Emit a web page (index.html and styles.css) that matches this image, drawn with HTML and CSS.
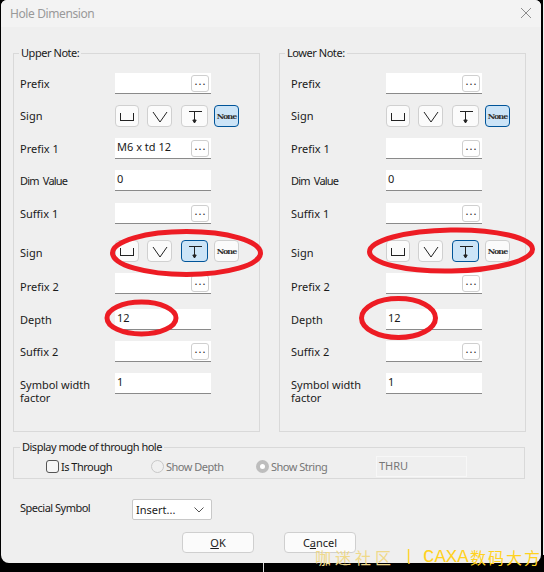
FILE: index.html
```html
<!DOCTYPE html>
<html lang="en">
<head>
    <meta charset="UTF-8">
    <meta name="viewport" content="width=device-width, initial-scale=1.0">
    <title>Hole Dimension</title>
    <link rel="stylesheet" href="styles.css">
</head>
<body>
    <div class="dialog">
        <div class="title-bar">
            <span class="title">Hole Dimension</span>
            <svg class="close" width="10" height="10" viewBox="0 0 10 10"><path d="M0 0L10 10M10 0L0 10"/></svg>
        </div>

        <div class="notes">
            <fieldset class="note note-upper">
                <legend>Upper Note:</legend>
                <div class="note-grid">
                    <label>Prefix</label>
                    <div class="field"><span></span><button class="more">...</button></div>

                    <label>Sign</label>
                    <div class="signs">
                        <button class="sign sign-a"><svg width="16" height="10" viewBox="0 0 16 10"><path d="M1.5 1V8.5H14.5V1"/></svg></button>
                        <button class="sign sign-b"><svg width="16" height="12" viewBox="0 0 16 12"><path d="M1 1L8 11L15 1"/></svg></button>
                        <button class="sign sign-c"><svg width="16" height="14" viewBox="0 0 16 14"><path d="M1.5 1.5H14.5M7.5 1.5V12"/><path class="head" d="M5.8 10L7.5 13L9.2 10Z"/></svg></button>
                        <button class="sign sign-d on">None</button>
                    </div>

                    <label>Prefix 1</label>
                    <div class="field"><span>M6 x td 12</span><button class="more">...</button></div>

                    <label class="tighter">Dim Value</label>
                    <div class="field"><span>0</span></div>

                    <label>Suffix 1</label>
                    <div class="field"><span></span><button class="more">...</button></div>

                    <label class="down-2">Sign</label>
                    <div class="signs">
                        <button class="sign sign-a"><svg width="16" height="10" viewBox="0 0 16 10"><path d="M1.5 1V8.5H14.5V1"/></svg></button>
                        <button class="sign sign-b"><svg width="16" height="12" viewBox="0 0 16 12"><path d="M1 1L8 11L15 1"/></svg></button>
                        <button class="sign sign-c on"><svg width="16" height="14" viewBox="0 0 16 14"><path d="M1.5 1.5H14.5M7.5 1.5V12"/><path class="head" d="M5.8 10L7.5 13L9.2 10Z"/></svg></button>
                        <button class="sign sign-d">None</button>
                    </div>

                    <label class="down-3">Prefix 2</label>
                    <div class="field"><span></span><button class="more">...</button></div>

                    <label>Depth</label>
                    <div class="field"><span>12</span></div>

                    <label>Suffix 2</label>
                    <div class="field"><span></span><button class="more">...</button></div>

                    <label class="two-line">Symbol width factor</label>
                    <div class="field"><span>1</span></div>
                </div>
            </fieldset>

            <fieldset class="note note-lower">
                <legend>Lower Note:</legend>
                <div class="note-grid">
                    <label>Prefix</label>
                    <div class="field"><span></span><button class="more">...</button></div>

                    <label>Sign</label>
                    <div class="signs">
                        <button class="sign sign-a"><svg width="16" height="10" viewBox="0 0 16 10"><path d="M1.5 1V8.5H14.5V1"/></svg></button>
                        <button class="sign sign-b"><svg width="16" height="12" viewBox="0 0 16 12"><path d="M1 1L8 11L15 1"/></svg></button>
                        <button class="sign sign-c"><svg width="16" height="14" viewBox="0 0 16 14"><path d="M1.5 1.5H14.5M7.5 1.5V12"/><path class="head" d="M5.8 10L7.5 13L9.2 10Z"/></svg></button>
                        <button class="sign sign-d on">None</button>
                    </div>

                    <label>Prefix 1</label>
                    <div class="field"><span></span><button class="more">...</button></div>

                    <label class="tighter">Dim Value</label>
                    <div class="field"><span>0</span></div>

                    <label>Suffix 1</label>
                    <div class="field"><span></span><button class="more">...</button></div>

                    <label class="down-2">Sign</label>
                    <div class="signs">
                        <button class="sign sign-a"><svg width="16" height="10" viewBox="0 0 16 10"><path d="M1.5 1V8.5H14.5V1"/></svg></button>
                        <button class="sign sign-b"><svg width="16" height="12" viewBox="0 0 16 12"><path d="M1 1L8 11L15 1"/></svg></button>
                        <button class="sign sign-c on"><svg width="16" height="14" viewBox="0 0 16 14"><path d="M1.5 1.5H14.5M7.5 1.5V12"/><path class="head" d="M5.8 10L7.5 13L9.2 10Z"/></svg></button>
                        <button class="sign sign-d">None</button>
                    </div>

                    <label class="down-3">Prefix 2</label>
                    <div class="field"><span></span><button class="more">...</button></div>

                    <label>Depth</label>
                    <div class="field"><span>12</span></div>

                    <label>Suffix 2</label>
                    <div class="field"><span></span><button class="more">...</button></div>

                    <label class="two-line">Symbol width factor</label>
                    <div class="field"><span>1</span></div>
                </div>
            </fieldset>
        </div>

        <fieldset class="through">
            <legend>Display mode of through hole</legend>
            <div class="through-row">
                <span class="check"></span><span class="opt opt-check">Is Through</span>
                <span class="radio"></span><span class="opt opt-depth muted">Show Depth</span>
                <span class="radio checked"></span><span class="opt opt-string muted">Show String</span>
                <span class="thru">THRU</span>
            </div>
        </fieldset>

        <div class="symbol-row">
            <span class="symbol-label">Special Symbol</span>
            <div class="select">
                <span>Insert...</span>
                <svg width="10" height="6" viewBox="0 0 10 6"><path d="M0.5 0.5L5 5L9.5 0.5"/></svg>
            </div>
        </div>

        <div class="actions">
            <button class="action"><u>O</u>K</button>
            <button class="action">C<u>a</u>ncel</button>
        </div>
    </div>

    <!-- marks drawn over the screenshot -->
    <svg class="marks" width="544" height="572" viewBox="0 0 544 572">
        <ellipse cx="186.5" cy="253" rx="74" ry="21.5"/>
        <ellipse cx="141.5" cy="318" rx="34.5" ry="16"/>
        <ellipse cx="451" cy="250.5" rx="81.5" ry="20.5" transform="rotate(-1 451 250.5)"/>
        <ellipse cx="398.5" cy="318" rx="37" ry="19.5"/>
    </svg>
    <div class="desktop-line"></div>
    <div class="desktop-edge"></div>
    <div class="watermark">
        <span class="wm-cn">咖迷社区</span>
        <span class="wm-sep">|</span>
        <span class="wm-en">CAXA</span>
        <span class="wm-cn2">数码大方</span>
    </div>
</body>
</html>
```

FILE: styles.css
```css
* {
    box-sizing: border-box;
}
body {
    margin: 0;
    width: 544px;
    height: 572px;
    overflow: hidden;
    position: relative;
    background-color: #000;
    font-family: "Noto Sans", Arial, sans-serif;
    font-size: 11px;
    color: #1a1a1a;
}
button {
    font-family: inherit;
    font-size: inherit;
    color: inherit;
    padding: 0;
    cursor: pointer;
}
svg path {
    fill: none;
    stroke: #222;
    stroke-width: 1;
}
.dialog {
    width: 540px;
    height: 563px;
    margin-left: 1px;
    background-color: #efefef;
    border-radius: 6px 6px 8px 8px;
    overflow: hidden;
}
.title-bar {
    height: 27px;
    padding: 0 10px 1px 9px;
    display: flex;
    align-items: center;
    justify-content: space-between;
    background-color: #f3f3f3;
}
.title {
    font-size: 12px;
    letter-spacing: -0.4px;
    color: #999;
}
.close path {
    stroke: #8d8d8d;
}
.notes {
    display: flex;
    gap: 19px;
    padding: 19px 0 0 12px;
}
fieldset {
    margin: 0;
    border: 1px solid #d9d9d9;
    min-width: 0;
}
legend {
    padding: 0 2px;
    line-height: 14px;
    letter-spacing: -0.45px;
}
.note {
    height: 386px;
    width: 247px;
    padding: 13px 0 0 6px;
}
.note legend {
    margin-left: -1px;
}
.note-lower {
    padding-left: 11px;
}
.note-lower legend {
    margin-left: -6px;
}
.note-grid {
    display: grid;
    grid-template-columns: 95px 1fr;
    grid-template-rows: 32px 33px 32px 33px 37px 33px 36px 32px 32px auto;
    align-items: start;
}
.note-grid label {
    line-height: 21px;
}
.note-grid label.tighter {
    letter-spacing: -0.8px;
    word-spacing: 2px;
}
.note-grid label.down-2 {
    padding-top: 2px;
}
.note-grid label.down-3 {
    padding-top: 3px;
}
.note-grid label.two-line {
    line-height: 13px;
    padding-top: 5px;
}
.field {
    width: 96px;
    height: 21px;
    display: flex;
    justify-content: space-between;
    padding: 2px 2px 0 2px;
    background-color: #fff;
    border-bottom: 1px solid #8a8a8a;
    line-height: 13px;
}
.more {
    width: 18px;
    height: 17px;
    padding: 0 0 5px 1px;
    line-height: 10px;
    letter-spacing: 1px;
    background-color: #fff;
    border: 1px solid #cfcfcf;
    border-radius: 3px;
}
.signs {
    display: flex;
    height: 22px;
}
.sign {
    height: 22px;
    display: flex;
    align-items: center;
    justify-content: center;
    background-color: #fbfbfb;
    border: 1px solid #d0d0d0;
    border-radius: 4px;
}
.sign svg {
    margin-top: 2px;
    shape-rendering: crispEdges;
}
.sign-b svg {
    shape-rendering: auto;
}
.sign .head {
    fill: #222;
    shape-rendering: auto;
}
.sign-a {
    width: 24px;
}
.sign-b {
    width: 25px;
    margin-left: 8px;
}
.sign-c {
    width: 27px;
    margin-left: 9px;
}
.sign-d {
    width: 25px;
    margin-left: 6px;
    font-family: "DejaVu Serif", serif;
    font-size: 8px;
    font-weight: bold;
    letter-spacing: -1px;
    color: #333;
}
.sign.on {
    background-color: #cce4f7;
    border-color: #005499;
}
.through {
    width: 512px;
    height: 39px;
    margin: 8px 0 0 12px;
    padding: 0;
    position: relative;
}
.through legend {
    margin-left: 6px;
    letter-spacing: -0.5px;
}
.through-row {
    display: flex;
    align-items: center;
    height: 24px;
    padding-left: 32px;
}
.check {
    width: 13px;
    height: 13px;
    background-color: #f6f6f6;
    border: 1px solid #555;
    border-radius: 3px;
}
.radio {
    width: 13px;
    height: 13px;
    background-color: #f0f0f0;
    border: 1px solid #c8c8c8;
    border-radius: 50%;
}
.radio.checked {
    background-color: #fff;
    border: 4px solid #bdbdbd;
}
.opt {
    margin-left: 2px;
    letter-spacing: -0.5px;
}
.opt-check {
    width: 90px;
}
.opt-depth {
    width: 90px;
}
.opt-string {
    width: 105px;
}
.muted {
    color: #777;
}
.thru {
    width: 91px;
    height: 21px;
    padding: 1px 2px;
    margin-top: 1px;
    color: #777;
    border: 1px solid #f7f7f7;
}
.symbol-row {
    display: flex;
    align-items: center;
    margin: 20px 0 0 19px;
}
.symbol-label {
    width: 112px;
    margin-top: -5px;
    letter-spacing: -0.5px;
}
.select {
    width: 80px;
    height: 21px;
    padding: 0 7px 0 3px;
    display: flex;
    align-items: center;
    justify-content: space-between;
    background-color: #fff;
    border: 1px solid #c8c8c8;
    border-radius: 2px;
}
.select path {
    stroke: #555;
}
.actions {
    display: flex;
    gap: 30px;
    margin: 12px 0 0 181px;
}
.action {
    width: 72px;
    height: 21px;
    background-color: #fbfbfb;
    border: 1px solid #cfcfcf;
    border-radius: 4px;
}
.marks {
    position: absolute;
    left: 0;
    top: 0;
    fill: none;
    stroke: #ed1c24;
    stroke-width: 5;
}
.desktop-line {
    position: absolute;
    left: 263px;
    top: 563px;
    width: 1px;
    height: 9px;
    background-color: #ddd;
}
.desktop-edge {
    position: absolute;
    left: 543px;
    top: 0;
    width: 1px;
    height: 555px;
    background-color: #eee;
}
.watermark {
    position: absolute;
    left: 315px;
    top: 547px;
    display: flex;
    align-items: center;
    white-space: nowrap;
    font-family: "Noto Sans CJK SC", sans-serif;
    font-size: 16px;
    line-height: 20px;
    color: #ffd21e;
}
.wm-cn {
    width: 89px;
    letter-spacing: 4px;
    color: #efd98a;
}
.wm-sep {
    width: 19px;
    font-family: "Liberation Mono", monospace;
}
.wm-en {
    width: 47px;
    font-family: "Liberation Mono", monospace;
    font-size: 19px;
}
.wm-cn2 {
    letter-spacing: 2px;
    font-size: 16px;
}
```
